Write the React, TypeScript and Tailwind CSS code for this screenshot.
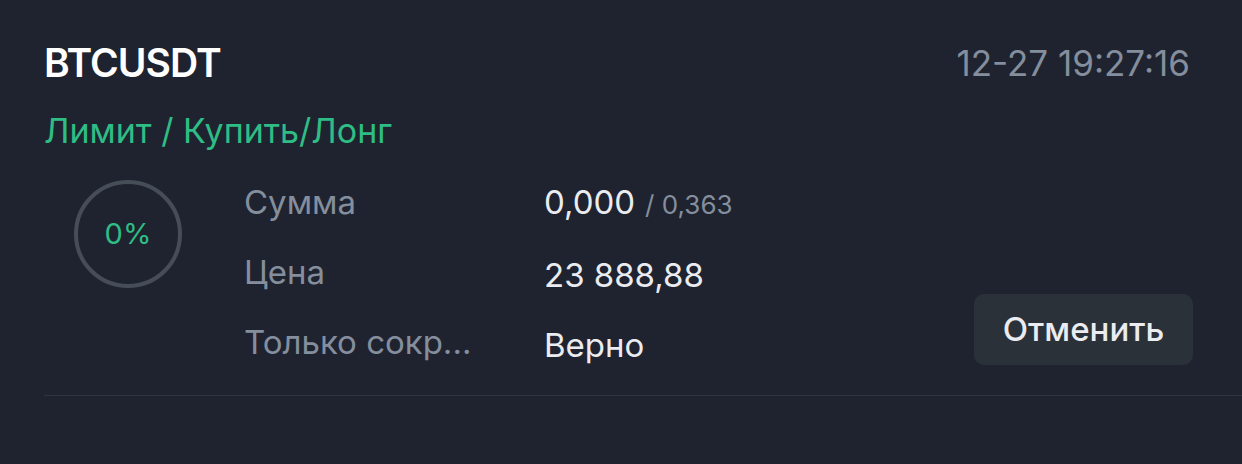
export default function App() {
  const rows = [
    { label: 'Сумма', value: '0,000', sub: '0,363' },
    { label: 'Цена', value: '23 888,88' },
    { label: 'Только сокр...', value: 'Верно' },
  ]

  return (
    <div className="w-[1242px] h-[464px] bg-[#1f2330] pl-[44px] pt-[37px] font-['Inter',sans-serif] overflow-hidden">
      {/* Header */}
      <div className="flex items-center justify-between pr-[52px] h-[52px]">
        <span className="text-white font-semibold text-[39px] tracking-tight">BTCUSDT</span>
        <span className="text-[#848e9c] text-[35px]">12-27 19:27:16</span>
      </div>
      <div className="mt-[20px] text-[#2ebd85] text-[34px] leading-[44px]">Лимит / Купить/Лонг</div>

      {/* Body */}
      <div className="flex mt-[27px] pr-[49px] pb-[28px] border-b border-[#2f3440]">
        <div className="w-[200px] shrink-0">
          <div className="w-[108px] h-[108px] ml-[30px] rounded-full border-[4px] border-[#474d57] flex items-center justify-center">
            <span className="text-[#2ebd85] text-[29px]">0%</span>
          </div>
        </div>
        <div className="flex flex-col gap-[26px] w-[300px] shrink-0">
          {rows.map((r) => (
            <span key={r.label} className="text-[#848e9c] text-[33px] leading-[44px]">{r.label}</span>
          ))}
        </div>
        <div className="flex flex-col gap-[26px] flex-1">
          {rows.map((r) => (
            <div key={r.label} className="text-[#eaecef] text-[33px] leading-[44px]">
              {r.value}
              {r.sub && <span className="text-[#848e9c] text-[26px] ml-[10px]">/ {r.sub}</span>}
            </div>
          ))}
        </div>
        <button className="self-end mb-[2px] w-[219px] h-[71px] rounded-[10px] bg-[#2b3139] text-[#eaecef] text-[33px] font-medium">
          Отменить
        </button>
      </div>
    </div>
  )
}
